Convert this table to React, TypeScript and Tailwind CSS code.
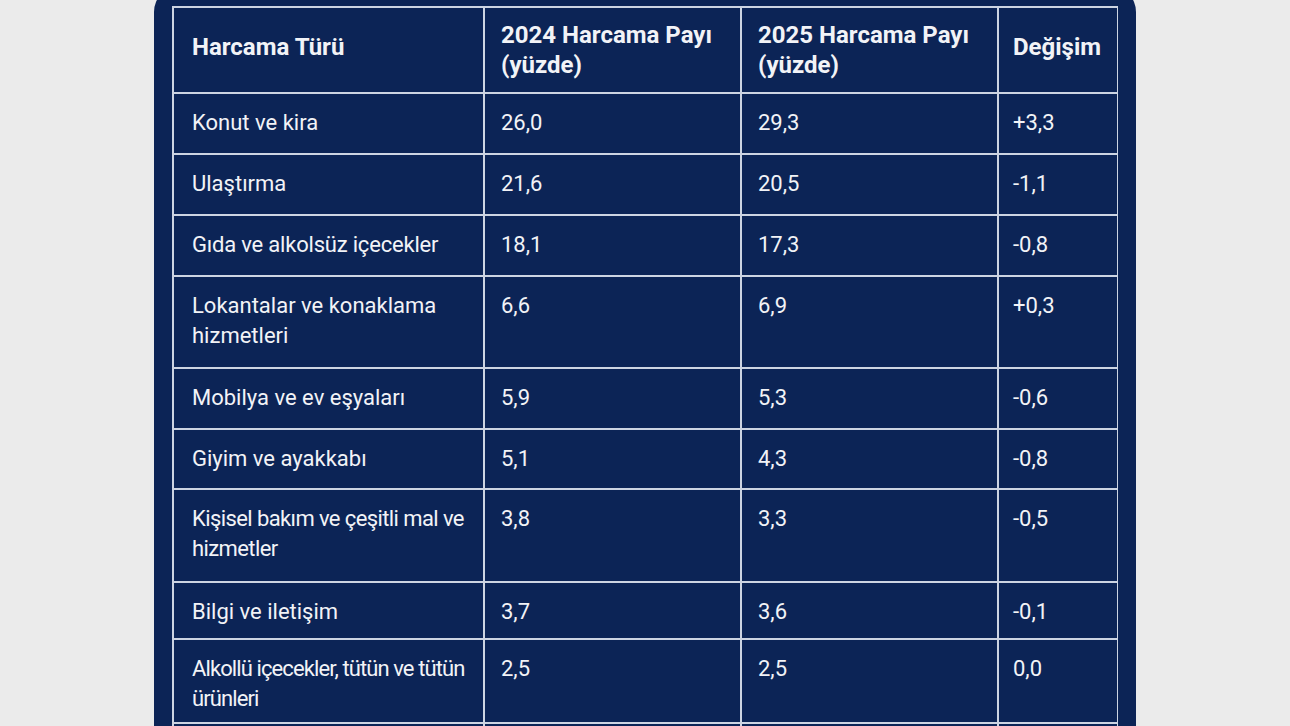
import React from "react";

type Row = { name: React.ReactNode; a: string; b: string; c: string; h: string; t?: string };

const rows: Row[] = [
  { name: "Konut ve kira", a: "26,0", b: "29,3", c: "+3,3", h: "h-[59px]" },
  { name: "Ulaştırma", a: "21,6", b: "20,5", c: "-1,1", h: "h-[59px]" },
  { name: "Gıda ve alkolsüz içecekler", a: "18,1", b: "17,3", c: "-0,8", h: "h-[59px]", t: "tracking-[-0.2px]" },
  { name: <>Lokantalar ve konaklama<br />hizmetleri</>, a: "6,6", b: "6,9", c: "+0,3", h: "h-[90px]" },
  { name: "Mobilya ve ev eşyaları", a: "5,9", b: "5,3", c: "-0,6", h: "h-[59px]" },
  { name: "Giyim ve ayakkabı", a: "5,1", b: "4,3", c: "-0,8", h: "h-[58px]" },
  { name: <>Kişisel bakım ve çeşitli mal ve<br />hizmetler</>, a: "3,8", b: "3,3", c: "-0,5", h: "h-[91px]", t: "tracking-[-0.6px]" },
  { name: "Bilgi ve iletişim", a: "3,7", b: "3,6", c: "-0,1", h: "h-[55px]" },
  { name: <>Alkollü içecekler, tütün ve tütün<br />ürünleri</>, a: "2,5", b: "2,5", c: "0,0", h: "h-[82px]", t: "tracking-[-0.9px]" },
  { name: "", a: "", b: "", c: "", h: "h-[59px]" },
];

const cell = "bg-[#0c2456] pt-[14px] text-[22px] font-normal leading-[30px] text-[#f2f3f7] whitespace-nowrap";
const head = "bg-[#0c2456] h-[84px] flex items-center text-[24px] font-bold leading-[30px] text-[#f2f3f7] whitespace-nowrap";

export default function App() {
  return (
    <div className="w-[1290px] h-[726px] overflow-hidden bg-[#ebebeb] flex justify-center font-['Roboto','Liberation_Sans',sans-serif]">
      <div className="w-[982px] mt-[-14px] rounded-t-[26px] bg-[#0c2456] pt-[20px] px-[18px] h-[900px]">
        <div className="grid grid-cols-[309px_255px_255px_118px] gap-[2px] p-[2px] bg-[#cdd4e2] w-[946px]">
          <div className={`${head} pl-[18px] pb-[6px]`}>Harcama Türü</div>
          <div className={`${head} pl-[16px]`}>
            <div>
              2024 Harcama Payı
              <br />
              (yüzde)
            </div>
          </div>
          <div className={`${head} pl-[16px]`}>
            <div>
              2025 Harcama Payı
              <br />
              (yüzde)
            </div>
          </div>
          <div className={`${head} pl-[14px] pb-[6px]`}>Değişim</div>
          {rows.map((r, i) => (
            <React.Fragment key={i}>
              <div className={`${cell} ${r.h} ${r.t ?? ""} pl-[18px]`}>{r.name}</div>
              <div className={`${cell} ${r.h} pl-[16px]`}>{r.a}</div>
              <div className={`${cell} ${r.h} pl-[16px]`}>{r.b}</div>
              <div className={`${cell} ${r.h} pl-[14px]`}>{r.c}</div>
            </React.Fragment>
          ))}
        </div>
      </div>
    </div>
  );
}
